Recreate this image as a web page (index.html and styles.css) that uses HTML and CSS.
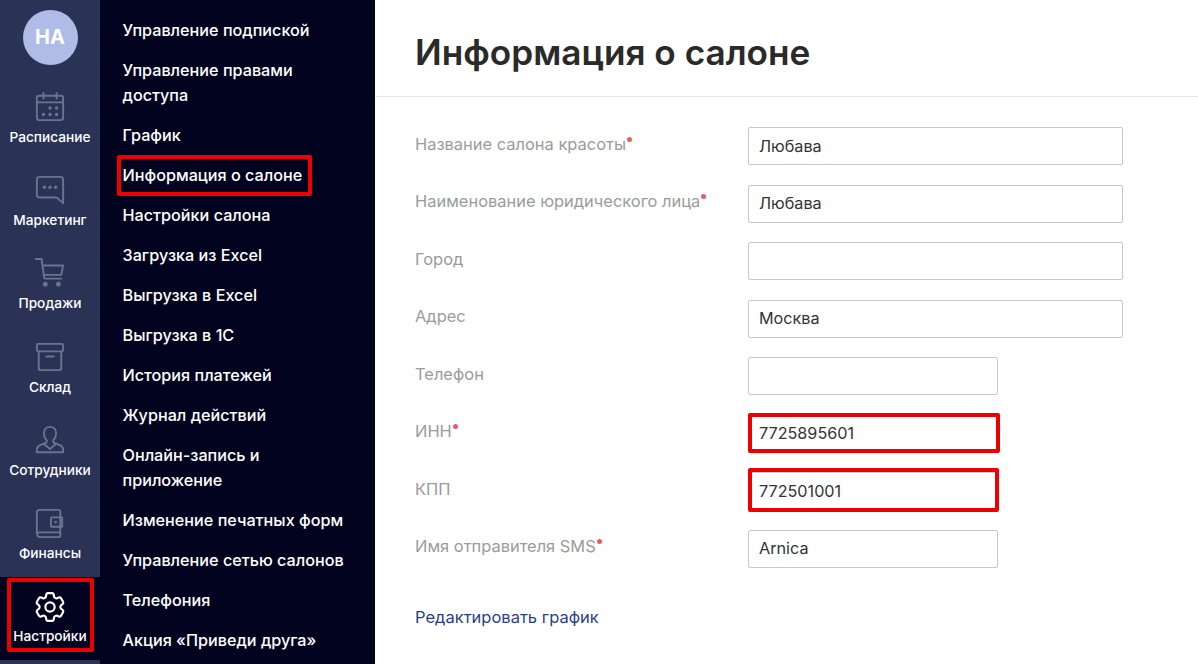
FILE: index.html
```html
<!DOCTYPE html>
<html lang="ru">
<head>
<meta charset="utf-8">
<title>Информация о салоне</title>
<link rel="stylesheet" href="styles.css">
</head>
<body>
<div class="app">
  <nav class="rail">
    <div class="avatar-wrap"><div class="avatar">НА</div></div>
    <a class="rail-item">
      <svg class="rail-icon" viewBox="0 0 32 32"><rect x="2" y="4" width="28" height="26" rx="2.5"/><path d="M2 11h28M9 1v6M23 1v6"/><g class="dots"><circle cx="16" cy="17" r="1.800"/><circle cx="23" cy="17" r="1.800"/><circle cx="9" cy="24" r="1.800"/><circle cx="16" cy="24" r="1.800"/><circle cx="23" cy="24" r="1.800"/></g></svg>
      <span>Расписание</span>
    </a>
    <a class="rail-item">
      <svg class="rail-icon" viewBox="0 0 32 32"><path d="M5 2h22a3 3 0 0 1 3 3v25l-7-6H5a3 3 0 0 1-3-3V5a3 3 0 0 1 3-3z"/><g class="dots"><circle cx="10" cy="13" r="1.800"/><circle cx="16" cy="13" r="1.800"/><circle cx="22" cy="13" r="1.800"/></g></svg>
      <span>Маркетинг</span>
    </a>
    <a class="rail-item">
      <svg class="rail-icon" viewBox="0 0 32 32"><path d="M1 1h6l3 21h18M8 8h22l-2 10H9.500"/><g class="dots"><circle cx="11" cy="28" r="2.600"/><circle cx="25" cy="28" r="2.600"/></g></svg>
      <span>Продажи</span>
    </a>
    <a class="rail-item">
      <svg class="rail-icon" viewBox="0 0 32 32"><rect x="2" y="2" width="28" height="8" rx="1.500"/><path d="M4 10v18a2 2 0 0 0 2 2h20a2 2 0 0 0 2-2V10M12 15.500h8"/></svg>
      <span>Склад</span>
    </a>
    <a class="rail-item">
      <svg class="rail-icon" viewBox="0 0 32 32"><path d="M16 2c-4 0-6.500 3-6.500 7 0 3 1.200 5.500 3 7.500v2l-8 3.500C3 23 2 24.500 2 26v3h28v-3c0-1.500-1-3-2.500-4l-8-3.500v-2c1.800-2 3-4.500 3-7.500 0-4-2.500-7-6.500-7z"/><path d="M10 20.500l6 5 6-5"/></svg>
      <span>Сотрудники</span>
    </a>
    <a class="rail-item">
      <svg class="rail-icon" viewBox="0 0 32 32"><path d="M2 27V5a3 3 0 0 1 3-3h20a2 2 0 0 1 2 2v22H5a2.500 2.500 0 0 0 0 5h20a2 2 0 0 0 2-2v-3"/><path d="M29 10H18a1 1 0 0 0-1 1v8a1 1 0 0 0 1 1h11z"/><g class="dots"><circle cx="22" cy="15" r="1.500"/></g></svg>
      <span>Финансы</span>
    </a>
    <a class="rail-item active">
      <svg class="rail-icon gear" viewBox="2.300 2.500 19.400 19"><path d="M9.594 3.940c.09-.542.56-.94 1.110-.94h2.593c.55 0 1.020.398 1.110.94l.213 1.281c.063.374.313.686.645.870.074.040.147.083.220.127.325.196.720.257 1.075.124l1.217-.456a1.125 1.125 0 0 1 1.370.490l1.296 2.247a1.125 1.125 0 0 1-.26 1.431l-1.003.827c-.293.241-.438.613-.43.992a7.723 7.723 0 0 1 0 .255c-.008.378.137.750.43.991l1.004.827c.424.350.534.955.26 1.430l-1.298 2.247a1.125 1.125 0 0 1-1.369.491l-1.217-.456c-.355-.133-.750-.072-1.076.124a6.470 6.470 0 0 1-.220.128c-.331.183-.581.495-.644.869l-.213 1.281c-.09.543-.56.94-1.110.94h-2.594c-.55 0-1.019-.398-1.110-.94l-.213-1.281c-.062-.374-.312-.686-.644-.870a6.520 6.520 0 0 1-.220-.127c-.325-.196-.720-.257-1.076-.124l-1.217.456a1.125 1.125 0 0 1-1.369-.49l-1.297-2.247a1.125 1.125 0 0 1 .26-1.431l1.004-.827c.292-.24.437-.613.43-.991a6.932 6.932 0 0 1 0-.255c.007-.38-.138-.751-.43-.992l-1.004-.827a1.125 1.125 0 0 1-.26-1.430l1.297-2.247a1.125 1.125 0 0 1 1.370-.491l1.216.456c.356.133.751.072 1.076-.124.072-.044.146-.086.220-.128.332-.183.582-.495.644-.869l.214-1.280Z"/><circle cx="12" cy="12" r="3"/></svg>
      <span>Настройки</span>
    </a>
  </nav>
  <aside class="menu">
    <a class="menu-item">Управление подпиской</a>
    <a class="menu-item">Управление правами доступа</a>
    <a class="menu-item">График</a>
    <a class="menu-item current">Информация о салоне</a>
    <a class="menu-item">Настройки салона</a>
    <a class="menu-item">Загрузка из Excel</a>
    <a class="menu-item">Выгрузка в Excel</a>
    <a class="menu-item">Выгрузка в 1С</a>
    <a class="menu-item">История платежей</a>
    <a class="menu-item">Журнал действий</a>
    <a class="menu-item">Онлайн-запись и приложение</a>
    <a class="menu-item">Изменение печатных форм</a>
    <a class="menu-item">Управление сетью салонов</a>
    <a class="menu-item">Телефония</a>
    <a class="menu-item">Акция «Приведи друга»</a>
  </aside>
  <main class="content">
    <header class="head"><h1>Информация о салоне</h1></header>
    <form class="form">
      <label class="row"><span class="lbl req">Название салона красоты</span><input class="field" value="Любава"></label>
      <label class="row"><span class="lbl req">Наименование юридического лица</span><input class="field" value="Любава"></label>
      <label class="row"><span class="lbl">Город</span><input class="field" value=""></label>
      <label class="row"><span class="lbl">Адрес</span><input class="field" value="Москва"></label>
      <label class="row"><span class="lbl">Телефон</span><input class="field short" value=""></label>
      <label class="row"><span class="lbl req">ИНН</span><input class="field short" value="7725895601"><span class="annot annot-inn"></span></label>
      <label class="row"><span class="lbl">КПП</span><input class="field short" value="772501001"><span class="annot annot-kpp"></span></label>
      <label class="row"><span class="lbl req">Имя отправителя SMS</span><input class="field short" value="Arnica"></label>
    </form>
    <a class="link">Редактировать график</a>
  </main>
</div>
</body>
</html>
```
FILE: styles.css
```css
*, *::before, *::after { box-sizing: border-box; }
html, body { margin: 0; height: 100%; }
body { font-family: "Inter", "Liberation Sans", sans-serif; background: #fff; overflow: hidden; }
.app { display: flex; height: 664px; }
.rail { width: 100px; flex: none; background: #2a3356; display: flex; flex-direction: column; }
.avatar-wrap { height: 77px; padding-top: 10px; display: flex; justify-content: center; }
.avatar { width: 55px; height: 55px; border-radius: 50%; background: #b0bbe6; color: #fff; font-weight: 700; font-size: 20px; line-height: 54px; text-align: center; }
.rail-item { height: 83.2px; display: flex; flex-direction: column; align-items: center; padding-top: 15px; color: #fff; font-size: 13.7px; font-weight: 500; position: relative; }
.rail-item span { margin-top: 6px; line-height: 18px; }
.rail-icon { width: 30px; height: 30px; fill: none; stroke: #6c7390; stroke-width: 2; stroke-linecap: round; stroke-linejoin: round; overflow: visible; }
.rail-icon .dots { fill: #6c7390; stroke: none; }
.rail-item.active { background: #02041f; height: 83px; margin-top: 0.8px; }
.rail-item.active span { margin-top: 5px; }
.rail-item.active .rail-icon { stroke: #fff; }
.rail-icon.gear { stroke-width: 1.400; }
.rail-item.active::after { content: ""; position: absolute; left: 7px; top: 1px; width: 87px; height: 74px; border: 4px solid #ee0000; border-radius: 2px; }
.menu { width: 275px; flex: none; background: #02041f; padding: 17.5px 22px 0 22.5px; display: flex; flex-direction: column; gap: 15px; }
.menu-item { color: #fff; font-size: 16.2px; font-weight: 500; line-height: 25px; position: relative; }
.menu-item.current::after { content: ""; position: absolute; left: -6px; top: -7.5px; width: 195px; height: 41px; border: 4px solid #ee0000; border-radius: 2px; }
.content { flex: 1; min-width: 0; }
.head { height: 97px; border-bottom: 1px solid #e8e8e8; padding: 31px 0 0 40px; }
h1 { margin: 0; font-size: 35.2px; line-height: 42px; font-weight: 600; color: #2a2a2a; }
.form { padding: 30px 0 0 40px; display: flex; flex-direction: column; gap: 19.5px; }
.row { display: flex; height: 38px; position: relative; }
.lbl { width: 333px; flex: none; margin-top: -0.3px; color: #9b9b9b; font-size: 16.45px; line-height: 34px; }
.req::after { content: ""; display: inline-block; width: 5px; height: 5px; border-radius: 50%; background: #ee5a60; margin-left: 1px; vertical-align: 8px; }
.field { width: 375px; height: 38px; border: 1px solid #c8c8c8; border-radius: 2px; padding: 0 10px 0.6px; font: 16.2px "Inter", "Liberation Sans", sans-serif; color: #333; background: #fff; }
.field.short { width: 250px; }
.annot { position: absolute; border: 4px solid #ee0000; border-radius: 2px; }
.annot-inn { left: 332.5px; top: -1.5px; width: 252.5px; height: 40px; }
.annot-kpp { left: 332.5px; top: -4px; width: 251.5px; height: 44px; }
.link { display: block; margin: 39px 0 0 40px; font-size: 16.5px; line-height: 20px; color: #2b3f86; }
```
